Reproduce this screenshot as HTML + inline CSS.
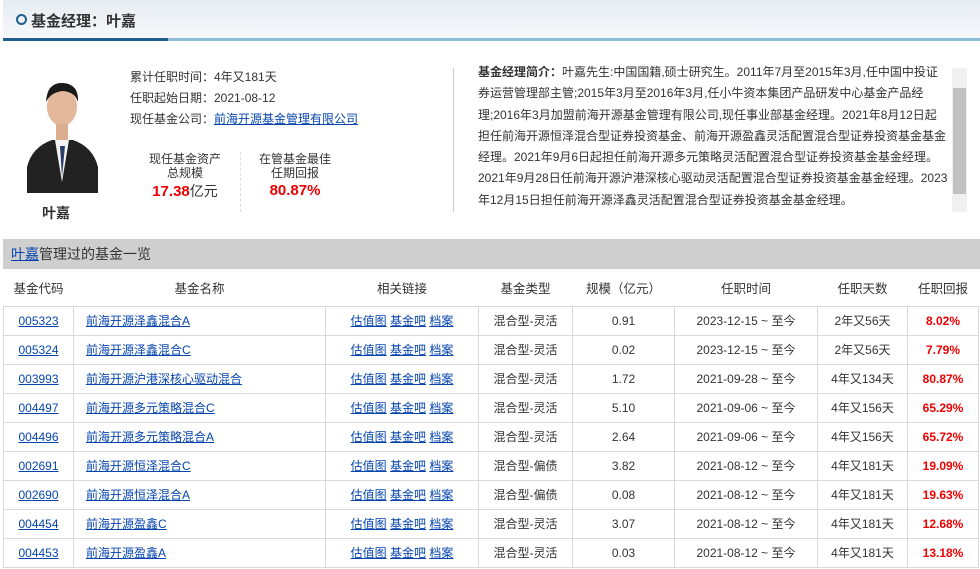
<!DOCTYPE html>
<html><head><meta charset="utf-8"><style>
*{margin:0;padding:0;box-sizing:border-box}
body{width:980px;height:569px;overflow:hidden;background:#fff;font-family:"Liberation Sans","Noto Sans CJK SC",sans-serif;font-size:12px;color:#333;position:relative}
a{color:#0645ad;text-decoration:underline}
.hd{position:absolute;left:3px;top:0;width:977px;height:38px;background:linear-gradient(#e6ecf2,#f6f8fb)}
.hd span{position:absolute;left:28px;top:10px;font-size:15px;font-weight:bold;color:#333}
.hd i{position:absolute;left:13px;top:14px;width:11px;height:11px;border:2px solid #1f5f8b;border-radius:50%}
.ln1{position:absolute;left:3px;top:38px;width:165px;height:3px;background:#1f5f8b}
.ln2{position:absolute;left:168px;top:38px;width:812px;height:3px;background:#8fbcd6}
.ab{position:absolute}
.photo{left:27px;top:72px;width:71px;height:121px}
.info div{height:21px;line-height:21px;font-size:12px}
.big{color:#e00;font-weight:bold;font-size:15px}
.intro{left:478px;top:64px;width:470px;font-size:12px;line-height:21.3px;color:#333}
.sb{left:952px;top:68px;width:15px;height:144px;background:#f0f0f0}
.sb div{position:absolute;left:1px;top:20px;width:13px;height:106px;background:#c1c1c1}
.bar{left:3px;top:239px;width:977px;height:30px;background:#cfcfcf;font-size:14px;line-height:30px;padding-left:8px}
table{position:absolute;left:3px;top:269px;width:975px;border-collapse:collapse;table-layout:fixed}
td,th{font-weight:normal;height:29px;text-align:center;font-size:12px;border:1px solid #d9d9d9}
th{height:37px;border:none;font-size:12.5px}
tr:first-child th{border-bottom:1px solid #d9d9d9}
td.l{text-align:left;padding-left:12px}
td.r{color:#e00;font-weight:bold}
</style></head><body>
<div class="hd"><i></i><span>基金经理：叶嘉</span></div>
<div class="ln1"></div><div class="ln2"></div>
<svg class="ab photo" viewBox="0 0 71 121">
<rect width="71" height="121" fill="#fff"/>
<path d="M0 121 L0 95 Q5 75 25 68 L46 68 Q66 75 71 95 L71 121Z" fill="#222"/>
<path d="M28 68 L35 110 L42 68Z" fill="#f4f4f4"/>
<path d="M33 74 L35 105 L38 74Z" fill="#2a3d6b"/>
<ellipse cx="35" cy="35" rx="15" ry="19" fill="#e4b89a"/>
<path d="M19 30 Q20 10 36 11 Q52 12 51 30 Q48 20 36 19 Q24 20 19 30Z" fill="#1a1a1a"/>
<rect x="29" y="52" width="12" height="16" fill="#dcae90"/>
</svg>
<div class="ab" style="left:42px;top:203px;font-size:14px;font-weight:bold">叶嘉</div>
<div class="ab info" style="left:130px;top:67px">
<div>累计任职时间：4年又181天</div>
<div>任职起始日期：2021-08-12</div>
<div>现任基金公司：<a>前海开源基金管理有限公司</a></div>
</div>
<div class="ab" style="left:140px;top:152px;width:90px;text-align:center;line-height:14px">现任基金资产<br>总规模<div style="margin-top:4px"><span class="big">17.38</span><span style="font-size:14px">亿元</span></div></div>
<div class="ab" style="left:240px;top:152px;height:60px;border-left:1px dashed #ddd"></div>
<div class="ab" style="left:250px;top:152px;width:90px;text-align:center;line-height:14px">在管基金最佳<br>任期回报<div style="margin-top:4px"><span class="big">80.87%</span></div></div>
<div class="ab" style="left:453px;top:68px;height:144px;border-left:1px solid #ccc"></div>
<div class="ab intro" style="height:150px;overflow:hidden;top:62px"><b>基金经理简介：</b>叶嘉先生:中国国籍,硕士研究生。2011年7月至2015年3月,任中国中投证券运营管理部主管;2015年3月至2016年3月,任小牛资本集团产品研发中心基金产品经理;2016年3月加盟前海开源基金管理有限公司,现任事业部基金经理。2021年8月12日起担任前海开源恒泽混合型证券投资基金、前海开源盈鑫灵活配置混合型证券投资基金基金经理。2021年9月6日起担任前海开源多元策略灵活配置混合型证券投资基金基金经理。2021年9月28日任前海开源沪港深核心驱动灵活配置混合型证券投资基金基金经理。2023年12月15日担任前海开源泽鑫灵活配置混合型证券投资基金基金经理。</div>
<div class="ab sb"><div></div></div>
<div class="ab bar"><a>叶嘉</a>管理过的基金一览</div>
<table>
<colgroup><col style="width:70px"><col style="width:252px"><col style="width:153px"><col style="width:94px"><col style="width:102px"><col style="width:143px"><col style="width:90px"><col style="width:71px"></colgroup>
<tr><th>基金代码</th><th>基金名称</th><th>相关链接</th><th>基金类型</th><th>规模（亿元）</th><th>任职时间</th><th>任职天数</th><th>任职回报</th></tr>
<tr><td><a>005323</a></td><td class="l"><a>前海开源泽鑫混合A</a></td><td><a>估值图</a> <a>基金吧</a> <a>档案</a></td><td>混合型-灵活</td><td>0.91</td><td>2023-12-15 ~ 至今</td><td>2年又56天</td><td class="r">8.02%</td></tr>
<tr><td><a>005324</a></td><td class="l"><a>前海开源泽鑫混合C</a></td><td><a>估值图</a> <a>基金吧</a> <a>档案</a></td><td>混合型-灵活</td><td>0.02</td><td>2023-12-15 ~ 至今</td><td>2年又56天</td><td class="r">7.79%</td></tr>
<tr><td><a>003993</a></td><td class="l"><a>前海开源沪港深核心驱动混合</a></td><td><a>估值图</a> <a>基金吧</a> <a>档案</a></td><td>混合型-灵活</td><td>1.72</td><td>2021-09-28 ~ 至今</td><td>4年又134天</td><td class="r">80.87%</td></tr>
<tr><td><a>004497</a></td><td class="l"><a>前海开源多元策略混合C</a></td><td><a>估值图</a> <a>基金吧</a> <a>档案</a></td><td>混合型-灵活</td><td>5.10</td><td>2021-09-06 ~ 至今</td><td>4年又156天</td><td class="r">65.29%</td></tr>
<tr><td><a>004496</a></td><td class="l"><a>前海开源多元策略混合A</a></td><td><a>估值图</a> <a>基金吧</a> <a>档案</a></td><td>混合型-灵活</td><td>2.64</td><td>2021-09-06 ~ 至今</td><td>4年又156天</td><td class="r">65.72%</td></tr>
<tr><td><a>002691</a></td><td class="l"><a>前海开源恒泽混合C</a></td><td><a>估值图</a> <a>基金吧</a> <a>档案</a></td><td>混合型-偏债</td><td>3.82</td><td>2021-08-12 ~ 至今</td><td>4年又181天</td><td class="r">19.09%</td></tr>
<tr><td><a>002690</a></td><td class="l"><a>前海开源恒泽混合A</a></td><td><a>估值图</a> <a>基金吧</a> <a>档案</a></td><td>混合型-偏债</td><td>0.08</td><td>2021-08-12 ~ 至今</td><td>4年又181天</td><td class="r">19.63%</td></tr>
<tr><td><a>004454</a></td><td class="l"><a>前海开源盈鑫C</a></td><td><a>估值图</a> <a>基金吧</a> <a>档案</a></td><td>混合型-灵活</td><td>3.07</td><td>2021-08-12 ~ 至今</td><td>4年又181天</td><td class="r">12.68%</td></tr>
<tr><td><a>004453</a></td><td class="l"><a>前海开源盈鑫A</a></td><td><a>估值图</a> <a>基金吧</a> <a>档案</a></td><td>混合型-灵活</td><td>0.03</td><td>2021-08-12 ~ 至今</td><td>4年又181天</td><td class="r">13.18%</td></tr>
</table>
</body></html>
